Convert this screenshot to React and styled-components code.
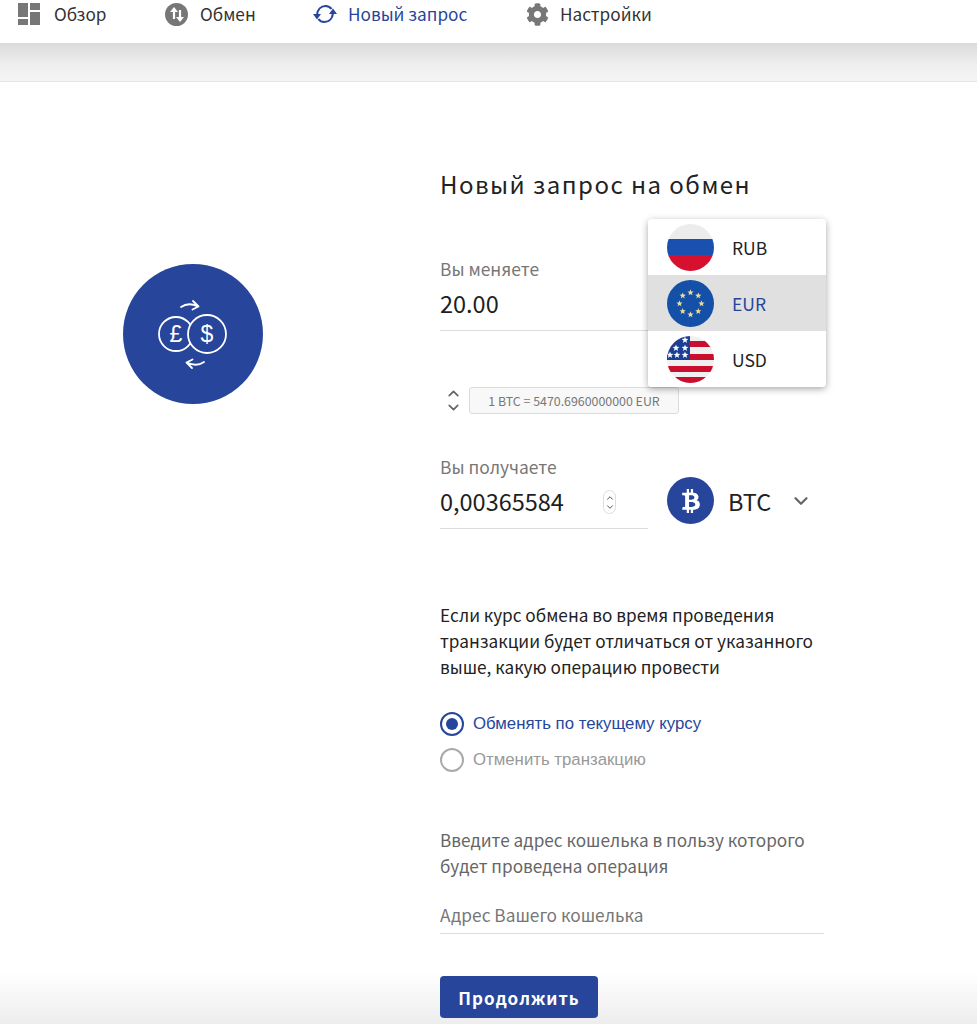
import React from "react";
import styled, { createGlobalStyle } from "styled-components";
import { FaCog, FaBtc } from "react-icons/fa";
import { ChevronDown, ChevronUp } from "lucide-react";

const BLUE = "#27469b";
const FONT = '"Noto Sans CJK JP", "Noto Sans", sans-serif';

const GlobalStyle = createGlobalStyle`
    html, body {
        margin: 0;
        padding: 0;
        background: #fff;
        font-family: ${FONT};
    }
`;

const Page = styled.div`
    width: 977px;
    height: 1024px;
    overflow: hidden;
    display: flex;
    flex-direction: column;
`;

const TopNav = styled.nav`
    height: 43px;
    flex-shrink: 0;
    box-sizing: border-box;
    display: flex;
    align-items: flex-start;
    padding: 2px 0 0 18px;
    background: #fff;
`;

const NavItem = styled.a`
    display: flex;
    align-items: center;
    gap: ${(props) => props.$gap || 12}px;
    width: ${(props) => props.$width}px;
    height: 24px;
    font-size: 17.2px;
    line-height: 24px;
    color: ${(props) => (props.$active ? BLUE : "#333")};
    svg {
        flex-shrink: 0;
    }
`;

const ShadowBand = styled.div`
    height: 38px;
    flex-shrink: 0;
    background: linear-gradient(#dadada, #eeeeee 55%, #f5f5f5);
    border-bottom: 1px solid #e4e4e4;
`;

const Main = styled.main`
    flex: 1;
    display: grid;
    grid-template-columns: 440px 384px;
    background: linear-gradient(#fff 94.5%, #ededed);
`;

const LeftColumn = styled.div`
    padding: 182px 0 0 123px;
`;

const BigCircle = styled.div`
    width: 140px;
    height: 140px;
    border-radius: 50%;
    background: ${BLUE};
    display: flex;
    align-items: center;
    justify-content: center;
`;

const Form = styled.div`
    padding-top: 84px;
    display: flex;
    flex-direction: column;
`;

const Title = styled.h1`
    margin: 0;
    font-size: 24px;
    font-weight: 400;
    line-height: 36px;
    letter-spacing: 1.47px;
    color: #222;
`;

const ExchangeRow = styled.div`
    position: relative;
    display: flex;
    align-items: flex-start;
    margin-top: ${(props) => props.$top}px;
`;

const AmountField = styled.div`
    width: 208px;
    height: 74px;
    box-sizing: border-box;
    border-bottom: 1px solid #dcdcdc;
    position: relative;
`;

const FieldLabel = styled.div`
    font-size: 17.4px;
    line-height: 24px;
    color: #777;
`;

const AmountValue = styled.div`
    font-size: 23.5px;
    line-height: 34px;
    margin-top: 5px;
    color: #1e1e1e;
`;

const Stepper = styled.div`
    position: absolute;
    right: 32px;
    top: 35px;
    width: 13px;
    height: 24px;
    box-sizing: border-box;
    border: 1px solid #ddd;
    border-radius: 7px;
    display: flex;
    flex-direction: column;
    align-items: center;
    justify-content: center;
    color: #444;
`;

const CurrencyMenu = styled.ul`
    position: absolute;
    left: 208px;
    top: -38px;
    width: 178px;
    margin: 0;
    padding: 0;
    list-style: none;
    background: #fff;
    border-radius: 4px;
    overflow: hidden;
    box-shadow: 0 2px 7px rgba(0, 0, 0, 0.35);
    z-index: 5;
`;

const CurrencyOption = styled.li`
    height: 56px;
    display: flex;
    align-items: center;
    gap: 18px;
    padding-left: 19px;
    font-size: 17.5px;
    color: ${(props) => (props.$selected ? BLUE : "#222")};
    background: ${(props) => (props.$selected ? "#e0e0e0" : "#fff")};
`;

const RateRow = styled.div`
    display: flex;
    align-items: center;
    gap: 8px;
    margin: 54px 0 0 5px;
`;

const RateArrows = styled.div`
    width: 16px;
    display: flex;
    flex-direction: column;
    align-items: center;
    color: #666;
`;

const RateBadge = styled.div`
    width: 210px;
    height: 27px;
    box-sizing: border-box;
    border: 1px solid #dcdcdc;
    border-radius: 3px;
    background: #f8f8f8;
    display: flex;
    align-items: center;
    justify-content: center;
    font-size: 12.4px;
    color: #777;
`;

const CoinPicker = styled.div`
    display: flex;
    align-items: center;
    margin: 22px 0 0 19px;
`;

const CoinBadge = styled.div`
    width: 47px;
    height: 47px;
    border-radius: 50%;
    background: ${BLUE};
    color: #fff;
    display: flex;
    align-items: center;
    justify-content: center;
`;

const CoinName = styled.span`
    margin-left: 14px;
    width: 62px;
    font-size: 23.5px;
    color: #222;
`;

const Question = styled.p`
    margin: 73px 0 0;
    font-size: 17.2px;
    line-height: 26px;
    color: #222;
`;

const RadioGroup = styled.div`
    margin-top: 32px;
    display: flex;
    flex-direction: column;
    gap: 12px;
`;

const RadioRow = styled.label`
    display: flex;
    align-items: center;
    gap: 9px;
    height: 24px;
    font-family: "Liberation Sans", Arial, sans-serif;
    font-size: 16.8px;
    color: ${(props) => (props.$checked ? BLUE : "#999")};
`;

const RadioDot = styled.span`
    width: 24px;
    height: 24px;
    box-sizing: border-box;
    border-radius: 50%;
    border: 2px solid ${(props) => (props.$checked ? BLUE : "#aaa")};
    display: flex;
    align-items: center;
    justify-content: center;
    &::after {
        content: "";
        width: 12px;
        height: 12px;
        border-radius: 50%;
        background: ${(props) => (props.$checked ? BLUE : "transparent")};
    }
`;

const WalletHint = styled.p`
    margin: 55px 0 0;
    font-size: 17.2px;
    line-height: 26px;
    color: #666;
`;

const WalletField = styled.div`
    margin-top: 23px;
    height: 32px;
    box-sizing: border-box;
    border-bottom: 1px solid #dcdcdc;
    font-size: 17.3px;
    line-height: 26px;
    color: #777;
`;

const SubmitButton = styled.button`
    margin-top: 42px;
    width: 158px;
    height: 42px;
    border: none;
    border-radius: 4px;
    background: ${BLUE};
    color: #fff;
    font-family: ${FONT};
    font-size: 17px;
    font-weight: 700;
    letter-spacing: 1px;
    padding: 0;
`;

const GridIcon = () => (
    <svg width="22" height="22" viewBox="0 0 22 22" fill="#777">
        <rect x="0" y="0" width="10" height="14" />
        <rect x="12" y="0" width="10" height="7" />
        <rect x="0" y="16" width="10" height="6" />
        <rect x="12" y="9" width="10" height="13" />
    </svg>
);

const SwapIcon = () => (
    <svg width="23" height="23" viewBox="0 0 23 23">
        <circle cx="11.5" cy="11.5" r="11.5" fill="#777" />
        <path d="M9 16V8" stroke="#fff" strokeWidth="2.2" fill="none" />
        <path d="M5 9l4-5 4 5z" fill="#fff" />
        <path d="M15 7v8" stroke="#fff" strokeWidth="2.2" fill="none" />
        <path d="M11 14l4 5 4-5z" fill="#fff" />
    </svg>
);

const SyncIcon = () => (
    <svg width="24" height="20" viewBox="0 0 24 20" fill="none" stroke={BLUE} strokeWidth="2.2">
        <path d="M4 11C4.500 5.500 8 2 12.500 2c2.700 0 4.700 1 6 3" />
        <path d="M20 9c-.5 5.500-4 9-8.500 9-2.700 0-4.700-1-6-3" />
        <path d="M0 10h8l-4 5.500z" fill={BLUE} stroke="none" />
        <path d="M16 10h8l-4-5.500z" fill={BLUE} stroke="none" />
    </svg>
);

const ExchangeArt = () => (
    <svg width="80" height="80" viewBox="0 0 80 80" fill="none" stroke="#fff" strokeWidth="1.8">
        <circle cx="23" cy="40" r="17" />
        <circle cx="54" cy="40" r="19" fill={BLUE} />
        <text x="23" y="48" fontSize="23" textAnchor="middle" fill="#fff" stroke="none" fontFamily="Liberation Sans">£</text>
        <text x="54" y="48" fontSize="23" textAnchor="middle" fill="#fff" stroke="none" fontFamily="Liberation Sans">$</text>
        <path d="M28 13c5-3.500 11-3.500 17-.5M40 7l5.500 5.500-6 3" strokeLinecap="round" strokeLinejoin="round" />
        <path d="M51 68c-5 3.500-11 3.500-17 .5M39 74l-5.500-5.500 6-3" strokeLinecap="round" strokeLinejoin="round" />
    </svg>
);

const RubFlag = () => (
    <svg width="47" height="47" viewBox="0 0 47 47">
        <clipPath id="rub"><circle cx="23.5" cy="23.5" r="23.5" /></clipPath>
        <g clipPath="url(#rub)">
            <rect width="47" height="15" fill="#ececec" />
            <rect y="15" width="47" height="16" fill="#1a51b0" />
            <rect y="31" width="47" height="16" fill="#d8102f" />
        </g>
    </svg>
);

const starPoints = (cx, cy, r) =>
    Array.from({ length: 10 }, (_, i) => {
        const a = (i * Math.PI) / 5 - Math.PI / 2;
        const d = i % 2 ? r * 0.42 : r;
        return `${cx + d * Math.cos(a)},${cy + d * Math.sin(a)}`;
    }).join(" ");

const EurFlag = () => (
    <svg width="47" height="47" viewBox="0 0 47 47">
        <circle cx="23.5" cy="23.5" r="23.5" fill="#1450a8" />
        {Array.from({ length: 8 }, (_, i) => {
            const a = (i * Math.PI) / 4 - Math.PI / 2;
            return (
                <polygon
                    key={i}
                    points={starPoints(23.5 + 11 * Math.cos(a), 23.5 + 11 * Math.sin(a), 3.3)}
                    fill="#eadf9a"
                />
            );
        })}
    </svg>
);

const UsdFlag = () => (
    <svg width="47" height="47" viewBox="0 0 47 47">
        <clipPath id="usd"><circle cx="23.5" cy="23.5" r="23.5" /></clipPath>
        <g clipPath="url(#usd)">
            <rect width="47" height="47" fill="#f0f0f0" />
            {[5, 18, 30, 41].map((y) => (
                <rect key={y} y={y} width="47" height="6" fill="#c8102e" />
            ))}
            <rect width="23" height="24" fill="#1c3f94" />
            {[
                [18, 4], [9, 12], [18, 12], [3, 19], [10, 19], [18, 19],
            ].map(([x, y]) => (
                <polygon key={`${x}-${y}`} points={starPoints(x, y, 3.6)} fill="#fff" />
            ))}
        </g>
    </svg>
);

const currencies = [
    { code: "RUB", Flag: RubFlag },
    { code: "EUR", Flag: EurFlag, selected: true },
    { code: "USD", Flag: UsdFlag },
];

const App = () => (
    <Page>
        <GlobalStyle />
        <TopNav>
            <NavItem $width={147} $gap={14}><GridIcon />Обзор</NavItem>
            <NavItem $width={148}><SwapIcon />Обмен</NavItem>
            <NavItem $width={213} $gap={11} $active><SyncIcon />Новый запрос</NavItem>
            <NavItem $gap={11}><FaCog size={23} color="#777" />Настройки</NavItem>
        </TopNav>
        <ShadowBand />
        <Main>
            <LeftColumn>
                <BigCircle><ExchangeArt /></BigCircle>
            </LeftColumn>
            <Form>
                <Title>Новый запрос на обмен</Title>
                <ExchangeRow $top={55}>
                    <AmountField>
                        <FieldLabel>Вы меняете</FieldLabel>
                        <AmountValue>20.00</AmountValue>
                    </AmountField>
                    <CurrencyMenu>
                        {currencies.map(({ code, Flag, selected }) => (
                            <CurrencyOption key={code} $selected={selected}>
                                <Flag />
                                {code}
                            </CurrencyOption>
                        ))}
                    </CurrencyMenu>
                </ExchangeRow>
                <RateRow>
                    <RateArrows>
                        <ChevronUp size={17} strokeWidth={2.4} style={{ marginBottom: -3 }} />
                        <ChevronDown size={17} strokeWidth={2.4} />
                    </RateArrows>
                    <RateBadge>1 BTC = 5470.6960000000 EUR</RateBadge>
                </RateRow>
                <ExchangeRow $top={39}>
                    <AmountField>
                        <FieldLabel>Вы получаете</FieldLabel>
                        <AmountValue>0,00365584</AmountValue>
                        <Stepper>
                            <ChevronUp size={10} strokeWidth={2.2} style={{ marginBottom: -1 }} />
                            <ChevronDown size={10} strokeWidth={2.2} />
                        </Stepper>
                    </AmountField>
                    <CoinPicker>
                        <CoinBadge><FaBtc size={24} /></CoinBadge>
                        <CoinName>BTC</CoinName>
                        <ChevronDown size={22} color="#666" strokeWidth={2.4} />
                    </CoinPicker>
                </ExchangeRow>
                <Question>
                    Если курс обмена во время проведения<br />
                    транзакции будет отличаться от указанного<br />
                    выше, какую операцию провести
                </Question>
                <RadioGroup>
                    <RadioRow $checked><RadioDot $checked />Обменять по текущему курсу</RadioRow>
                    <RadioRow><RadioDot />Отменить транзакцию</RadioRow>
                </RadioGroup>
                <WalletHint>
                    Введите адрес кошелька в пользу которого<br />
                    будет проведена операция
                </WalletHint>
                <WalletField>Адрес Вашего кошелька</WalletField>
                <SubmitButton>Продолжить</SubmitButton>
            </Form>
        </Main>
    </Page>
);

export default App;
